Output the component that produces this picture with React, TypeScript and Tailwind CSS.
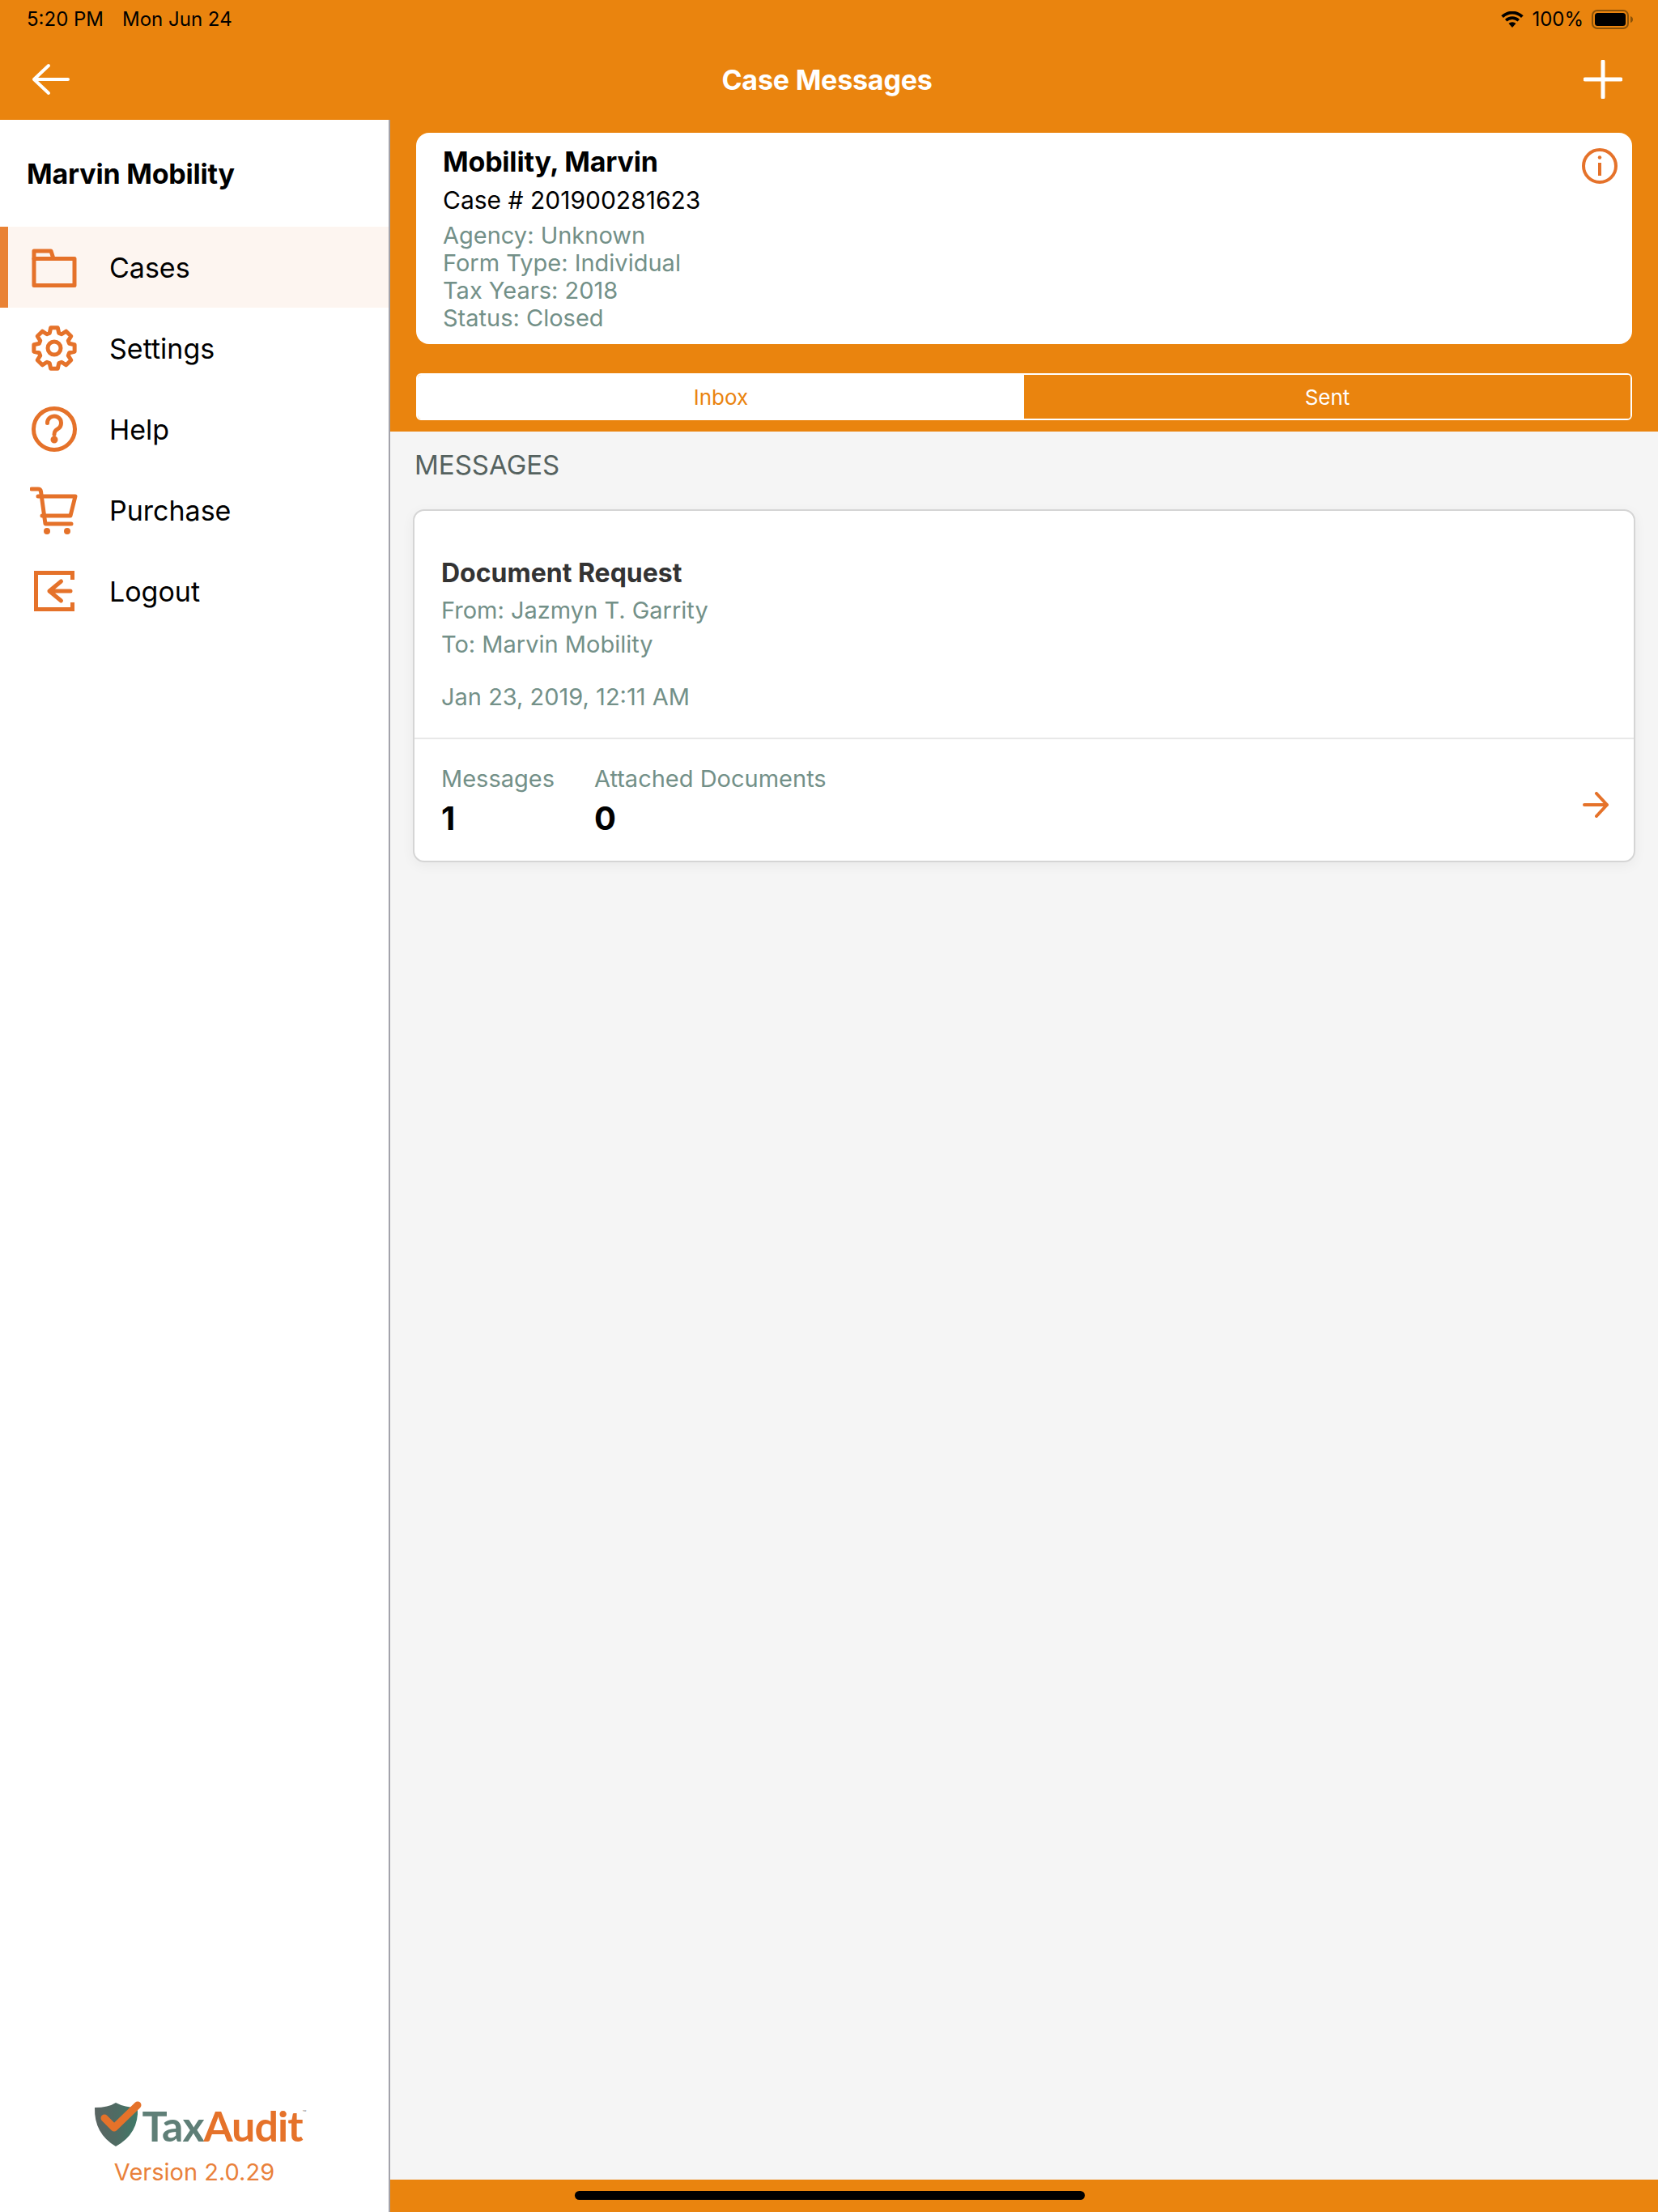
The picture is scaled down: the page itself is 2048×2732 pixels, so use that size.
import type { ReactNode } from "react";

const stroke = "#e5722a";

function gearPath() {
  const cx = 30;
  const cy = 30;
  const parts: string[] = [];
  for (let i = 0; i < 8; i++) {
    const a = (i * Math.PI) / 4 - Math.PI / 2;
    const pts: [number, number][] = [
      [19.5, a - 0.3],
      [25.5, a - 0.17],
      [25.5, a + 0.17],
      [19.5, a + 0.3],
    ];
    pts.forEach(([r, t], j) => {
      const x = (cx + r * Math.cos(t)).toFixed(2);
      const y = (cy + r * Math.sin(t)).toFixed(2);
      parts.push(`${i === 0 && j === 0 ? "M" : "L"}${x} ${y}`);
    });
  }
  return parts.join(" ") + " Z";
}

function IconBox({ children }: { children: ReactNode }) {
  return (
    <svg
      viewBox="0 0 60 60"
      fill="none"
      stroke={stroke}
      strokeWidth={5}
      strokeLinecap="round"
      strokeLinejoin="round"
      className="w-[60px] h-[60px] shrink-0"
    >
      {children}
    </svg>
  );
}

const MENU: { label: string; active?: boolean; icon: ReactNode }[] = [
  {
    label: "Cases",
    active: true,
    icon: (
      <IconBox>
        <path d="M5 10 H26 L29 19.5 H55 V52.5 H5 Z" />
        <path d="M5 19.5 H29" />
      </IconBox>
    ),
  },
  {
    label: "Settings",
    icon: (
      <IconBox>
        <path d={gearPath()} />
        <circle cx="30" cy="30" r="8" />
      </IconBox>
    ),
  },
  {
    label: "Help",
    icon: (
      <IconBox>
        <circle cx="30" cy="30" r="25.5" />
        <path d="M21.5 22.5 a8.5 8.5 0 1 1 13 7.2 c-3 2 -4.5 3 -4.5 6.8" />
        <circle cx="30" cy="43" r="2" fill={stroke} />
      </IconBox>
    ),
  },
  {
    label: "Purchase",
    icon: (
      <IconBox>
        <path d="M2 4 H10 Q13 4 13.5 7 L19 47 H51" />
        <path d="M10 13 H56 L50 37 H15" />
        <circle cx="21" cy="56" r="1.5" fill={stroke} />
        <circle cx="46" cy="56" r="1.5" fill={stroke} />
      </IconBox>
    ),
  },
  {
    label: "Logout",
    icon: (
      <IconBox>
        <path d="M52.5 16 V7.5 H7.5 V52.5 H52.5 V44" strokeLinecap="butt" strokeLinejoin="miter" />
        <path d="M50 30 H24 M38.5 18 L24 30 L38.5 42" />
      </IconBox>
    ),
  },
];

function StatusBar() {
  return (
    <div className="h-[48px] flex items-center justify-between pl-[33px] pr-[30px] text-black text-[24px]">
      <div className="flex gap-[23px]">
        <span>5:20 PM</span>
        <span>Mon Jun 24</span>
      </div>
      <div className="flex items-center gap-[10px]">
        <svg viewBox="0 0 28 20" className="w-[28px] h-[20px]" fill="#000">
          <path d="M14 20 L9.5 15 a6.5 6.5 0 0 1 9 0 Z" />
          <path d="M7.5 12.6 L5 10 a12.8 12.8 0 0 1 18 0 L20.5 12.6 a9.2 9.2 0 0 0 -13 0 Z" />
          <path d="M3 8 L0.3 5.3 a19.5 19.5 0 0 1 27.4 0 L25 8 a15.6 15.6 0 0 0 -22 0 Z" />
        </svg>
        <span>100%</span>
        <svg viewBox="0 0 52 24" className="w-[52px] h-[24px]">
          <rect x="1" y="1" width="44" height="22" rx="6" fill="none" stroke="#8a5208" strokeWidth="2" />
          <rect x="4" y="4" width="38" height="16" rx="3.5" fill="#000" />
          <path d="M48 8 Q51 9 51 12 Q51 15 48 16 Z" fill="#8a5208" />
        </svg>
      </div>
    </div>
  );
}

function NavBar() {
  return (
    <div className="h-[100px] flex items-center justify-between pl-[39px] pr-[44px]">
      <svg viewBox="0 0 48 40" className="w-[48px] h-[40px]" fill="none" stroke="#fff" strokeWidth={4} strokeLinecap="round" strokeLinejoin="round">
        <path d="M45 20 H3 M21 3 L3 20 L21 37" />
      </svg>
      <span className="text-white font-bold text-[34px] tracking-[-0.2px]">Case Messages</span>
      <svg viewBox="0 0 48 48" className="w-[48px] h-[48px]" fill="none" stroke="#fff" strokeWidth={5} strokeLinecap="round">
        <path d="M24 2 V46 M2 24 H46" />
      </svg>
    </div>
  );
}

function Sidebar() {
  return (
    <aside className="w-[482px] shrink-0 bg-white border-r-2 border-[#a3a3ab] flex flex-col">
      <div className="h-[132px] pl-[33px] flex items-center text-black font-bold text-[34px] tracking-[-0.2px]">
        Marvin Mobility
      </div>
      <nav className="flex flex-col">
        {MENU.map((item) => (
          <div
            key={item.label}
            className={
              item.active
                ? "h-[100px] flex items-center gap-[38px] pl-[27px] border-l-[10px] border-[#e98235] bg-[#fdf5f0]"
                : "h-[100px] flex items-center gap-[38px] pl-[37px]"
            }
          >
            {item.icon}
            <span className="text-black text-[34px]">{item.label}</span>
          </div>
        ))}
      </nav>
      <div className="mt-auto pb-[31px] flex flex-col items-center">
        <div className="flex items-center h-[60px] mb-[10px] pl-[14px]">
          <svg viewBox="0 0 60 60" className="w-[60px] h-[60px] shrink-0">
            <defs>
              <linearGradient id="shield" x1="0" y1="0" x2="1" y2="0">
                <stop offset="0" stopColor="#5a6462" />
                <stop offset="0.5" stopColor="#4f6b63" />
                <stop offset="1" stopColor="#3f7a68" />
              </linearGradient>
            </defs>
            <path d="M1 8 Q18 8 27 2 Q38 8 54 8 Q56 40 27 56 Q0 40 1 8 Z" fill="url(#shield)" />
            <path d="M13 21 L25 33 L54 5" fill="none" stroke="#e5722a" strokeWidth="9" strokeLinecap="round" strokeLinejoin="round" />
          </svg>
          <span className="font-[Lato,sans-serif] font-bold text-[52px] leading-none tracking-[-1px] text-[#5f7f77]">
            Tax<span className="text-[#e5722a]">Audit</span>
          </span>
          <span className="self-start mt-[8px] text-[8px] text-[#8a8a8a]">™</span>
        </div>
        <div className="text-[#e9813b] text-[29px] leading-[36px]">Version 2.0.29</div>
      </div>
    </aside>
  );
}

function CaseHeader() {
  return (
    <div className="bg-[#ea840e] px-[32px] pt-[16px] pb-[14px]">
      <div className="relative h-[261px] bg-white rounded-[16px] pl-[33px] pt-[14px]">
        <div className="text-black font-bold text-[34px] leading-[44px] tracking-[-0.2px]">Mobility, Marvin</div>
        <div className="text-black text-[30px] leading-[50px]">Case # 201900281623</div>
        <div className="mt-[2px] text-[#739088] text-[29px] leading-[34px]">
          <div>Agency: Unknown</div>
          <div>Form Type: Individual</div>
          <div>Tax Years: 2018</div>
          <div>Status: Closed</div>
        </div>
        <svg viewBox="0 0 44 44" className="absolute right-[18px] top-[19px] w-[44px] h-[44px]" fill="none" stroke={stroke} strokeWidth={4}>
          <circle cx="22" cy="22" r="20" />
          <path d="M22 18 V34" />
          <circle cx="22" cy="11.5" r="2.2" fill={stroke} stroke="none" />
        </svg>
      </div>
      <div className="mt-[36px] h-[58px] flex rounded-[6px] overflow-hidden border-2 border-white text-[26px]">
        <div className="flex-1 bg-white text-[#ea840e] flex items-center justify-center">Inbox</div>
        <div className="flex-1 bg-[#ea840e] text-white flex items-center justify-center">Sent</div>
      </div>
    </div>
  );
}

function MessageCard() {
  return (
    <div className="h-[436px] bg-white rounded-[14px] border-2 border-[#d5d5d5] shadow-[0_4px_16px_rgba(0,0,0,0.05)] flex flex-col">
      <div className="h-[280px] pl-[33px] pt-[57px]">
        <div className="text-[#333333] font-bold text-[32px] leading-[40px]">Document Request</div>
        <div className="mt-[5px] text-[#739088] text-[29px] leading-[42px]">From: Jazmyn T. Garrity</div>
        <div className="text-[#739088] text-[29px] leading-[42px]">To: Marvin Mobility</div>
        <div className="mt-[23px] text-[#739088] text-[29px] leading-[42px]">Jan 23, 2019, 12:11 AM</div>
      </div>
      <div className="h-[2px] bg-[#e8e8e8]" />
      <div className="flex-1 flex items-center pl-[33px] pr-[31px]">
        <div className="flex gap-[49px] flex-1 self-start pt-[29px]">
          <div>
            <div className="text-[#739088] text-[29px] leading-[40px]">Messages</div>
            <div className="mt-[5px] text-black font-bold text-[40px] leading-[48px]">1</div>
          </div>
          <div>
            <div className="text-[#739088] text-[29px] leading-[40px]">Attached Documents</div>
            <div className="mt-[5px] text-black font-bold text-[40px] leading-[48px]">0</div>
          </div>
        </div>
        <svg viewBox="0 0 32 32" className="w-[32px] h-[32px] mt-[12px]" fill="none" stroke={stroke} strokeWidth={4} strokeLinecap="round" strokeLinejoin="round">
          <path d="M2 16 H30 M17 2 L30 16 L17 30" />
        </svg>
      </div>
    </div>
  );
}

export default function App() {
  return (
    <div className="w-[2048px] h-[2732px] flex flex-col font-[Inter,sans-serif] bg-[#ea840e]">
      <header className="h-[148px] shrink-0">
        <StatusBar />
        <NavBar />
      </header>
      <div className="flex-1 flex min-h-0">
        <Sidebar />
        <main className="flex-1 flex flex-col">
          <CaseHeader />
          <section className="flex-1 bg-[#f5f5f5] px-[28px] pt-[21px]">
            <div className="ml-[2px] text-[#55625f] text-[33px] leading-[40px] mb-[35px]">MESSAGES</div>
            <MessageCard />
          </section>
          <div className="h-[40px] shrink-0 flex items-start justify-center bg-[#ea840e] pt-[14px]">
            <div className="w-[630px] h-[11px] rounded-full bg-black -ml-[481px]" />
          </div>
        </main>
      </div>
    </div>
  );
}
